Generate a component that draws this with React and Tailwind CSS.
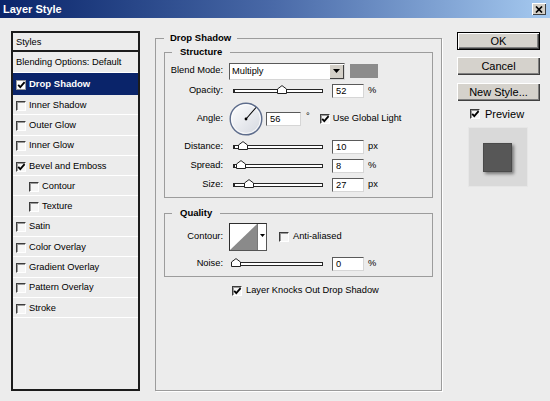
import React from "react";

function Check({ checked, className = "" }) {
  return (
    <span
      className={`relative inline-block w-[10px] h-[10px] shrink-0 bg-[#f6f6f6] border border-[#3c3c3c] border-r-white border-b-white shadow-[inset_1px_1px_0_#9a9a9a] ${className}`}
    >
      {checked && (
        <svg className="absolute left-[0px] top-[0px]" width="9" height="9" viewBox="0 0 9 9">
          <path d="M1.2 3.8 L3.3 6.2 L7.6 1.2" fill="none" stroke="#000" strokeWidth="1.8" />
        </svg>
      )}
    </span>
  );
}

function Slider({ pos }) {
  return (
    <div className="relative ml-[10px] w-[90px] h-[4px] border border-[#262626] border-l-2 bg-white">
      <svg className="absolute top-[-5px]" style={{ left: pos - 5 }} width="10" height="9" viewBox="0 0 10 9">
        <path d="M0.5 8.5 V4 L5 0.6 L9.5 4 V8.5 Z" fill="#fff" stroke="#222" strokeWidth="1" />
      </svg>
    </div>
  );
}

function Num({ v, className = "w-[32px]" }) {
  return (
    <div
      className={`${className} h-[14px] bg-white border border-[#5a5a5a] border-r-[#d6d6d6] border-b-[#d6d6d6] pl-[3px] leading-[12px]`}
    >
      {v}
    </div>
  );
}

function SliderRow({ label, pos, value, unit, className }) {
  return (
    <div className={`flex items-center h-[16px] ${className}`}>
      <div className="w-[58px] text-right">{label}</div>
      <Slider pos={pos} />
      <Num v={value} className="ml-[9px] w-[32px]" />
      <span className="ml-[4px]">{unit}</span>
    </div>
  );
}

function ListItem({ label, checked, indent }) {
  return (
    <div className="flex items-center h-[20.3px] border-b border-white shrink-0 pt-[2px]">
      <Check checked={checked} className={indent ? "ml-[16px]" : "ml-[3px]"} />
      <span className="ml-[3px]">{label}</span>
    </div>
  );
}

function Btn({ children, def }) {
  return (
    <div
      className={`w-[83px] h-[18px] flex items-center justify-center text-[11px] bg-[#d5d2cc] ${
        def
          ? "border border-black shadow-[inset_1px_1px_0_#fff,inset_-1px_-1px_0_#404040,inset_-2px_-2px_0_#808080]"
          : "shadow-[inset_1px_1px_0_#fff,inset_-1px_-1px_0_#404040,inset_-2px_-2px_0_#808080]"
      }`}
    >
      {children}
    </div>
  );
}

export default function App() {
  return (
    <div className="w-[550px] h-[401px] overflow-hidden bg-[#ececec] flex flex-col text-[9.3px] text-black font-['Liberation_Sans',Arial,sans-serif]">
      {/* title bar */}
      <div className="h-[18px] shrink-0 flex items-center justify-between bg-linear-to-r from-[#0a246a] via-[#4a6aa8] to-[#a6caf0] pl-[3px] pr-[4px]">
        <span className="text-white font-bold text-[11px] leading-[14px]">Layer Style</span>
        <div className="w-[14px] h-[12px] bg-[#d4d0c8] flex items-center justify-center shadow-[inset_1px_1px_0_#fff,inset_-1px_-1px_0_#404040]">
          <svg width="8" height="7" viewBox="0 0 8 7">
            <path d="M1 0.5 L7 6.5 M7 0.5 L1 6.5" stroke="#000" strokeWidth="1.7" />
          </svg>
        </div>
      </div>

      <div className="flex flex-1">
        {/* left list */}
        <div className="ml-[11px] mt-[13px] w-[129px] h-[360px] border-2 border-[#1c1c1c] flex flex-col bg-[#ececec]">
          <div className="h-[19px] shrink-0 border-b-2 border-[#1c1c1c] flex items-center pl-[3px] pt-[2px]">Styles</div>
          <div className="h-[21px] shrink-0 border-b border-white flex items-center pl-[3px] pt-[2px]">Blending Options: Default</div>
          <div className="h-[22px] shrink-0 bg-[#0a246a] flex items-center pt-[1px]">
            <span className="relative ml-[3px] inline-block w-[10px] h-[10px] bg-white border border-[#9a9a9a]">
              <svg className="absolute left-[0px] top-[0px]" width="9" height="9" viewBox="0 0 9 9">
                <path d="M1.2 3.8 L3.3 6.2 L7.6 1.2" fill="none" stroke="#000" strokeWidth="1.8" />
              </svg>
            </span>
            <span className="ml-[3px] text-white font-bold text-[9.5px]">Drop Shadow</span>
          </div>
          <ListItem label="Inner Shadow" />
          <ListItem label="Outer Glow" />
          <ListItem label="Inner Glow" />
          <ListItem label="Bevel and Emboss" checked />
          <ListItem label="Contour" indent />
          <ListItem label="Texture" indent />
          <ListItem label="Satin" />
          <ListItem label="Color Overlay" />
          <ListItem label="Gradient Overlay" />
          <ListItem label="Pattern Overlay" />
          <ListItem label="Stroke" />
        </div>

        {/* main group */}
        <fieldset className="ml-[15px] mt-[14px] w-[287px] h-[359px] border border-[#9c9c9c] shadow-[1px_1px_0_#fff]">
          <legend className="ml-[8px] px-[6px] font-bold text-[9.5px] leading-[12px]">Drop Shadow</legend>
          <div className="px-[8px]">
            <fieldset className="mt-[2px] border border-[#9c9c9c]">
              <legend className="ml-[7px] px-[8px] font-bold text-[9.5px] leading-[12px]">Structure</legend>
              <div className="pt-[4px] pb-[4px] flex flex-col">
                {/* blend mode */}
                <div className="flex items-center h-[18px]">
                  <div className="w-[58px] text-right">Blend Mode:</div>
                  <div className="ml-[6px] flex w-[116px] h-[17px] bg-white border border-[#5a5a5a] border-r-[#d6d6d6] border-b-[#d6d6d6]">
                    <div className="flex-1 pl-[2px] leading-[15px]">Multiply</div>
                    <div className="w-[15px] h-full bg-[#d4d0c8] flex items-center justify-center shadow-[inset_1px_1px_0_#fff,inset_-1px_-1px_0_#404040]">
                      <svg width="7" height="4" viewBox="0 0 7 4">
                        <path d="M0 0 H7 L3.5 4 Z" fill="#000" />
                      </svg>
                    </div>
                  </div>
                  <div className="ml-[5px] w-[28px] h-[14px] bg-[#8c8c8c]" />
                </div>

                <SliderRow label="Opacity:" pos={47} value="52" unit="%" className="mt-[3px]" />

                {/* angle */}
                <div className="flex items-center h-[34px] mt-[3px]">
                  <div className="w-[58px] text-right">Angle:</div>
                  <svg className="ml-[6px]" width="34" height="34" viewBox="0 0 34 34">
                    <defs>
                      <linearGradient id="dialg" x1="0" y1="0" x2="1" y2="1">
                        <stop offset="0" stopColor="#ffffff" />
                        <stop offset="1" stopColor="#d3d7df" />
                      </linearGradient>
                    </defs>
                    <circle cx="17" cy="17" r="15.8" fill="url(#dialg)" stroke="#5e6d8c" strokeWidth="1.4" />
                    <circle cx="17" cy="17" r="14.4" fill="none" stroke="#ffffff" strokeWidth="0.8" />
                    <line x1="17" y1="17" x2="27" y2="5.5" stroke="#000" strokeWidth="1.1" />
                    <circle cx="17" cy="17" r="1.4" fill="#000" />
                  </svg>
                  <Num v="56" className="ml-[3px] w-[35px]" />
                  <span className="ml-[5px] self-start mt-[9px] leading-[10px]">°</span>
                  <Check checked className="ml-[10px]" />
                  <span className="ml-[3px]">Use Global Light</span>
                </div>

                <SliderRow label="Distance:" pos={7.5} value="10" unit="px" className="mt-[3px]" />
                <SliderRow label="Spread:" pos={6} value="8" unit="%" className="mt-[3px]" />
                <SliderRow label="Size:" pos={14} value="27" unit="px" className="mt-[3px]" />
              </div>
            </fieldset>

            <fieldset className="mt-[9px] border border-[#9c9c9c]">
              <legend className="ml-[7px] px-[8px] font-bold text-[9.5px] leading-[12px]">Quality</legend>
              <div className="pt-[4px] pb-[4px] flex flex-col">
                <div className="flex items-center h-[28px]">
                  <div className="w-[58px] text-right">Contour:</div>
                  <div className="ml-[6px] flex w-[38px] h-[28px] bg-white border border-[#2e2e2e] border-r-[#555] border-b-[#555]">
                    <svg width="27" height="26" viewBox="0 0 27 26" className="shrink-0">
                      <path d="M0 26 L27 0 L27 26 Z" fill="#8a8a8a" />
                    </svg>
                    <div className="flex-1 border-l border-[#777] flex items-start justify-center pt-[10px]">
                      <svg width="5" height="3" viewBox="0 0 5 3">
                        <path d="M0 0 H5 L2.5 3 Z" fill="#000" />
                      </svg>
                    </div>
                  </div>
                  <Check className="ml-[12px]" />
                  <span className="ml-[4px]">Anti-aliased</span>
                </div>
                <SliderRow label="Noise:" pos={0.5} value="0" unit="%" className="mt-[5px]" />
              </div>
            </fieldset>

            <div className="mt-[7px] h-[13px] flex items-center pl-[68px]">
              <Check checked />
              <span className="ml-[4px]">Layer Knocks Out Drop Shadow</span>
            </div>
          </div>
        </fieldset>

        {/* right column */}
        <div className="ml-[15px] mt-[14px] w-[83px] flex flex-col">
          <Btn def>OK</Btn>
          <div className="mt-[7px]">
            <Btn>Cancel</Btn>
          </div>
          <div className="mt-[8px]">
            <Btn>New Style...</Btn>
          </div>
          <div className="mt-[7px] h-[12px] flex items-center pl-[13px]">
            <Check checked />
            <span className="ml-[5px] text-[11px]">Preview</span>
          </div>
          <div className="mt-[7px] ml-[11px] w-[60px] h-[60px] bg-[#d9d9d9] border border-[#e6e6e6] pt-[15px] pl-[14px]">
            <div className="w-[29px] h-[29px] bg-[#575757] border border-[#4a4a4a] shadow-[2px_2px_3px_rgba(0,0,0,0.45)]" />
          </div>
        </div>
      </div>
    </div>
  );
}
